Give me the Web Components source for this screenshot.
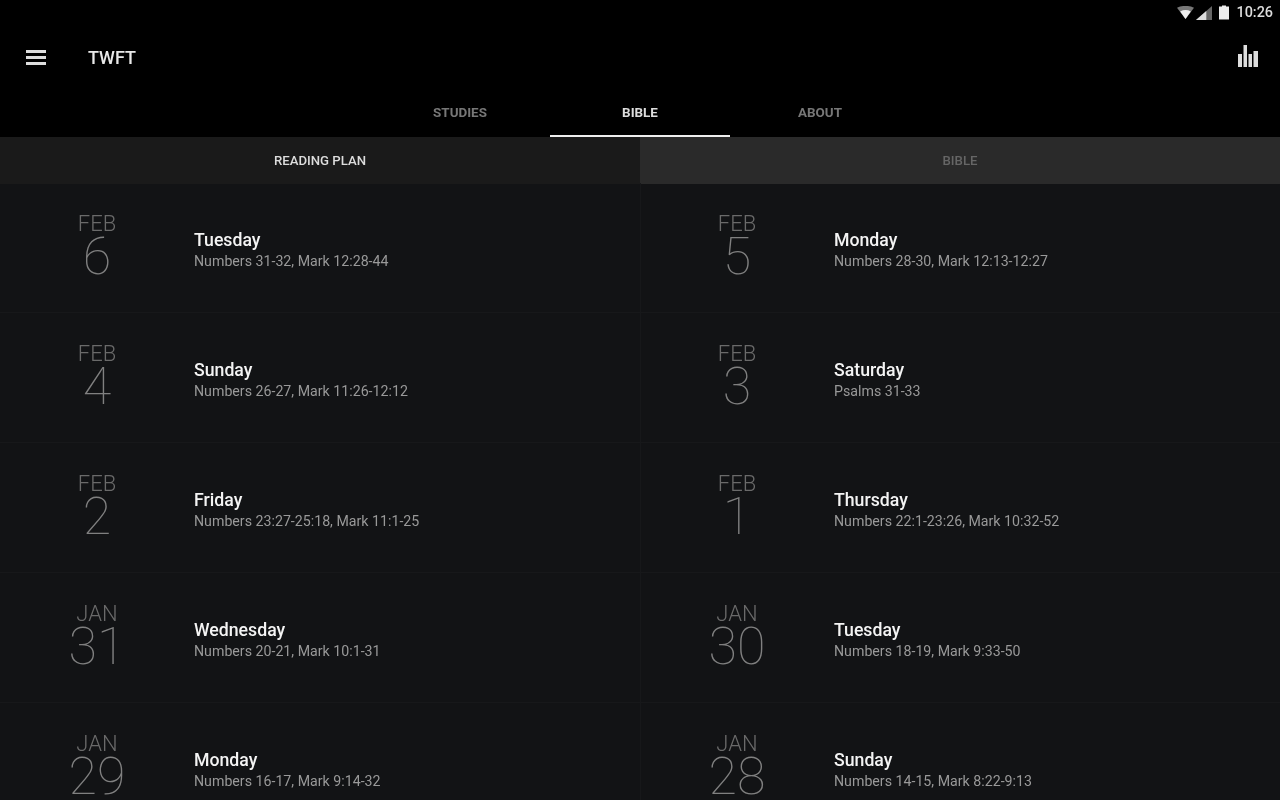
<!DOCTYPE html>
<html>
<head>
<meta charset="utf-8">
<title>TWFT</title>
<style>
    html, body { margin: 0; height: 100%; background: #000; overflow: hidden; }
    body { font-family: Roboto, "Liberation Sans", sans-serif; }
</style>
</head>
<body>
<app-shell></app-shell>

<script>
class StatusBar extends HTMLElement {
    constructor() {
        super();
        this.attachShadow({ mode: 'open' });
        this.shadowRoot.innerHTML = `
            <style>
                :host {
                    display: flex;
                    justify-content: flex-end;
                    align-items: center;
                    height: 25px;
                    padding-right: 7px;
                    color: #ddd;
                    font-size: 14.4px;
                    font-weight: 500;
                }
                svg { display: block; }
                .wifi { margin-right: 2px; }
                .signal { margin-right: 7px; }
                .battery { margin-right: 7px; }
            </style>
            <svg class="wifi" width="17" height="13" viewBox="0 0 16 12">
                <path d="M0 1.5Q8-2 16 1.5L8 12Z" fill="#777"/>
                <path d="M3 5Q8 2.5 13 5L8 12Z" fill="#eee"/>
            </svg>
            <svg class="signal" width="16" height="14" viewBox="0 0 14 13" preserveAspectRatio="none">
                <path d="M0 13L14 0V13Z" fill="#666"/>
                <path d="M0 13L9 4.6V13Z" fill="#ddd"/>
            </svg>
            <svg class="battery" width="10" height="15" viewBox="0 0 10 14">
                <path d="M3 0H7V1H10V14H0V1H3Z" fill="#eee"/>
            </svg>
            <span>10:26</span>
        `;
    }
}

class AppToolbar extends HTMLElement {
    constructor() {
        super();
        this.attachShadow({ mode: 'open' });
        this.shadowRoot.innerHTML = `
            <style>
                :host {
                    display: flex;
                    align-items: center;
                    height: 65px;
                    padding: 0 22px 0 26px;
                    color: #e8e8e8;
                }
                svg { display: block; }
                .title {
                    margin-left: 42px;
                    font-size: 18px;
                    font-weight: 500;
                    flex: 1;
                }
                .chart { margin-top: -4px; }
            </style>
            <svg width="20" height="15" viewBox="0 0 20 15" fill="#ddd">
                <rect y="0" width="20" height="3"/>
                <rect y="6" width="20" height="3"/>
                <rect y="12" width="20" height="3"/>
            </svg>
            <span class="title">TWFT</span>
            <svg class="chart" width="20" height="22" viewBox="0 0 20 22" fill="#ddd">
                <rect x="0" y="9" width="4" height="13"/>
                <rect x="5.5" y="0" width="3.5" height="22"/>
                <rect x="10.5" y="9" width="3.5" height="13"/>
                <rect x="15.5" y="6" width="4.5" height="16"/>
            </svg>
        `;
    }
}

class TabStrip extends HTMLElement {
    constructor() {
        super();
        this.attachShadow({ mode: 'open' });
        this.shadowRoot.innerHTML = `
            <style>
                :host {
                    display: flex;
                    justify-content: center;
                    height: 47px;
                }
                ::slotted(tab-item) { width: 180px; }
            </style>
            <slot></slot>
        `;
    }
}

class TabItem extends HTMLElement {
    constructor() {
        super();
        this.attachShadow({ mode: 'open' });
        this.shadowRoot.innerHTML = `
            <style>
                :host {
                    display: flex;
                    justify-content: center;
                    align-items: center;
                    box-sizing: border-box;
                    border-bottom: 2px solid transparent;
                    color: #777;
                    font-size: 13.4px;
                    font-weight: 700;
                }
                :host([active]) {
                    color: #ddd;
                    border-bottom-color: #eee;
                }
            </style>
            <slot></slot>
        `;
    }
}

class SubTabs extends HTMLElement {
    constructor() {
        super();
        this.attachShadow({ mode: 'open' });
        this.shadowRoot.innerHTML = `
            <style>
                :host {
                    display: grid;
                    grid-template-columns: 1fr 1fr;
                    height: 45px;
                    font-size: 13.2px;
                    font-weight: 500;
                    text-align: center;
                    line-height: 47px;
                }
                div { background: #1a1a1a; color: #ddd; }
                div + div { background: #2a2a2a; color: #666; }
            </style>
            <div>READING PLAN</div>
            <div>BIBLE</div>
        `;
    }
}

class ReadingList extends HTMLElement {
    constructor() {
        super();
        this.attachShadow({ mode: 'open' });
        this.shadowRoot.innerHTML = `
            <style>
                :host {
                    display: grid;
                    grid-template-columns: 1fr 1fr;
                    grid-auto-rows: 130px;
                    padding-top: 1px;
                    background: #121315;
                }
            </style>
            <slot></slot>
        `;
    }
}

class ReadingRow extends HTMLElement {
    constructor() {
        super();
        this.attachShadow({ mode: 'open' });
        this.shadowRoot.innerHTML = `
            <style>
                :host {
                    display: flex;
                    box-sizing: border-box;
                    border-bottom: 1px solid #17181a;
                }
                :host(:nth-child(even)) {
                    box-shadow: inset 1px 0 0 #17181a;
                }
                .date {
                    width: 194px;
                    flex: none;
                    padding-top: 30px;
                    display: flex;
                    flex-direction: column;
                    align-items: center;
                    color: #6a6a6a;
                    font-weight: 300;
                }
                .month { font-size: 22px; line-height: 22px; }
                .day { font-size: 52px; line-height: 48px; font-weight: 100; margin-top: -2px; color: #808080; }
                .text { padding-top: 47px; }
                .title {
                    color: #f4f4f4;
                    font-size: 17.7px;
                    font-weight: 500;
                    line-height: 20px;
                }
                .sub {
                    color: #999;
                    font-size: 14.2px;
                    line-height: 16px;
                    margin-top: 3px;
                }
            </style>
            <div class="date">
                <div class="month"></div>
                <div class="day"></div>
            </div>
            <div class="text">
                <div class="title"></div>
                <div class="sub"></div>
            </div>
        `;
    }

    connectedCallback() {
        const root = this.shadowRoot;
        root.querySelector('.month').textContent = this.getAttribute('month');
        root.querySelector('.day').textContent = this.getAttribute('day');
        root.querySelector('.title').textContent = this.getAttribute('weekday');
        root.querySelector('.sub').textContent = this.getAttribute('passage');
    }
}

const PLAN = [
    ['FEB', '6', 'Tuesday', 'Numbers 31-32, Mark 12:28-44'],
    ['FEB', '5', 'Monday', 'Numbers 28-30, Mark 12:13-12:27'],
    ['FEB', '4', 'Sunday', 'Numbers 26-27, Mark 11:26-12:12'],
    ['FEB', '3', 'Saturday', 'Psalms 31-33'],
    ['FEB', '2', 'Friday', 'Numbers 23:27-25:18, Mark 11:1-25'],
    ['FEB', '1', 'Thursday', 'Numbers 22:1-23:26, Mark 10:32-52'],
    ['JAN', '31', 'Wednesday', 'Numbers 20-21, Mark 10:1-31'],
    ['JAN', '30', 'Tuesday', 'Numbers 18-19, Mark 9:33-50'],
    ['JAN', '29', 'Monday', 'Numbers 16-17, Mark 9:14-32'],
    ['JAN', '28', 'Sunday', 'Numbers 14-15, Mark 8:22-9:13']
];

class AppShell extends HTMLElement {
    constructor() {
        super();
        this.attachShadow({ mode: 'open' });
        const rows = PLAN.map(([month, day, weekday, passage]) =>
            `<reading-row month="${month}" day="${day}" weekday="${weekday}" passage="${passage}"></reading-row>`
        ).join('');
        this.shadowRoot.innerHTML = `
            <style>
                /* the reference is a soft, upscaled capture */
                :host { display: block; height: 800px; overflow: hidden; background: #000; filter: blur(0.45px); }
            </style>
            <status-bar></status-bar>
            <app-toolbar></app-toolbar>
            <tab-strip>
                <tab-item>STUDIES</tab-item>
                <tab-item active>BIBLE</tab-item>
                <tab-item>ABOUT</tab-item>
            </tab-strip>
            <sub-tabs></sub-tabs>
            <reading-list>${rows}</reading-list>
        `;
    }
}

customElements.define('status-bar', StatusBar);
customElements.define('app-toolbar', AppToolbar);
customElements.define('tab-item', TabItem);
customElements.define('tab-strip', TabStrip);
customElements.define('sub-tabs', SubTabs);
customElements.define('reading-row', ReadingRow);
customElements.define('reading-list', ReadingList);
customElements.define('app-shell', AppShell);
</script>
</body>
</html>
